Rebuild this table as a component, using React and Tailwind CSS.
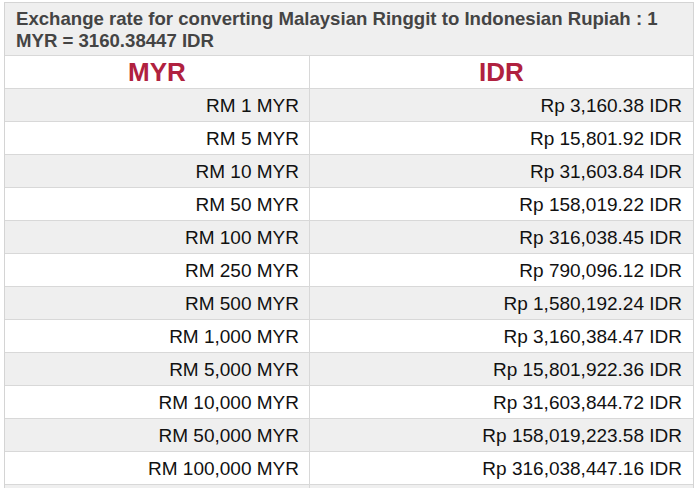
import React from "react";

const rows = [
  ["RM 1 MYR", "Rp 3,160.38 IDR"],
  ["RM 5 MYR", "Rp 15,801.92 IDR"],
  ["RM 10 MYR", "Rp 31,603.84 IDR"],
  ["RM 50 MYR", "Rp 158,019.22 IDR"],
  ["RM 100 MYR", "Rp 316,038.45 IDR"],
  ["RM 250 MYR", "Rp 790,096.12 IDR"],
  ["RM 500 MYR", "Rp 1,580,192.24 IDR"],
  ["RM 1,000 MYR", "Rp 3,160,384.47 IDR"],
  ["RM 5,000 MYR", "Rp 15,801,922.36 IDR"],
  ["RM 10,000 MYR", "Rp 31,603,844.72 IDR"],
  ["RM 50,000 MYR", "Rp 158,019,223.58 IDR"],
  ["RM 100,000 MYR", "Rp 316,038,447.16 IDR"],
];

function App() {
  return (
    <div className="bg-white w-[700px] h-[488px] overflow-hidden pt-[2px] pl-[4px] font-['Liberation_Sans',Arial,sans-serif]">
      <div className="w-[690px] border border-[#d4d4d4] bg-[#efefef]">
        {/* caption */}
        <div className="px-[11px] pt-[5px] pb-[3px] text-[18.6px] leading-[22px] font-bold text-[#444]">
          Exchange rate for converting Malaysian Ringgit to Indonesian Rupiah : 1 MYR = 3160.38447 IDR
        </div>

        <div className="flex border-t border-[#d8d8d8] bg-white h-[33px]">
          <div className="w-[305px] border-r border-[#d8d8d8] flex items-center justify-center text-[26px] font-bold text-[#b0213f]">
            MYR
          </div>
          <div className="flex-1 flex items-center justify-center text-[26px] font-bold text-[#b0213f]">
            IDR
          </div>
        </div>

        {rows.map((row, i) => (
          <div
            key={i}
            className={`flex border-t border-[#d8d8d8] h-[33px] text-[19px] text-[#111] ${
              i % 2 === 0 ? "bg-[#efefef]" : "bg-white"
            }`}
          >
            <div className="w-[305px] border-r border-[#d8d8d8] flex items-center justify-end pr-[10px] pt-[3px]">
              {row[0]}
            </div>
            <div className="flex-1 flex items-center justify-end pr-[11px] pt-[3px]">
              {row[1]}
            </div>
          </div>
        ))}
        <div className="flex border-t border-[#d8d8d8] h-[10px] bg-[#efefef]">
          <div className="w-[305px] border-r border-[#d8d8d8]" />
          <div className="flex-1" />
        </div>
      </div>
    </div>
  );
}

export default App;
